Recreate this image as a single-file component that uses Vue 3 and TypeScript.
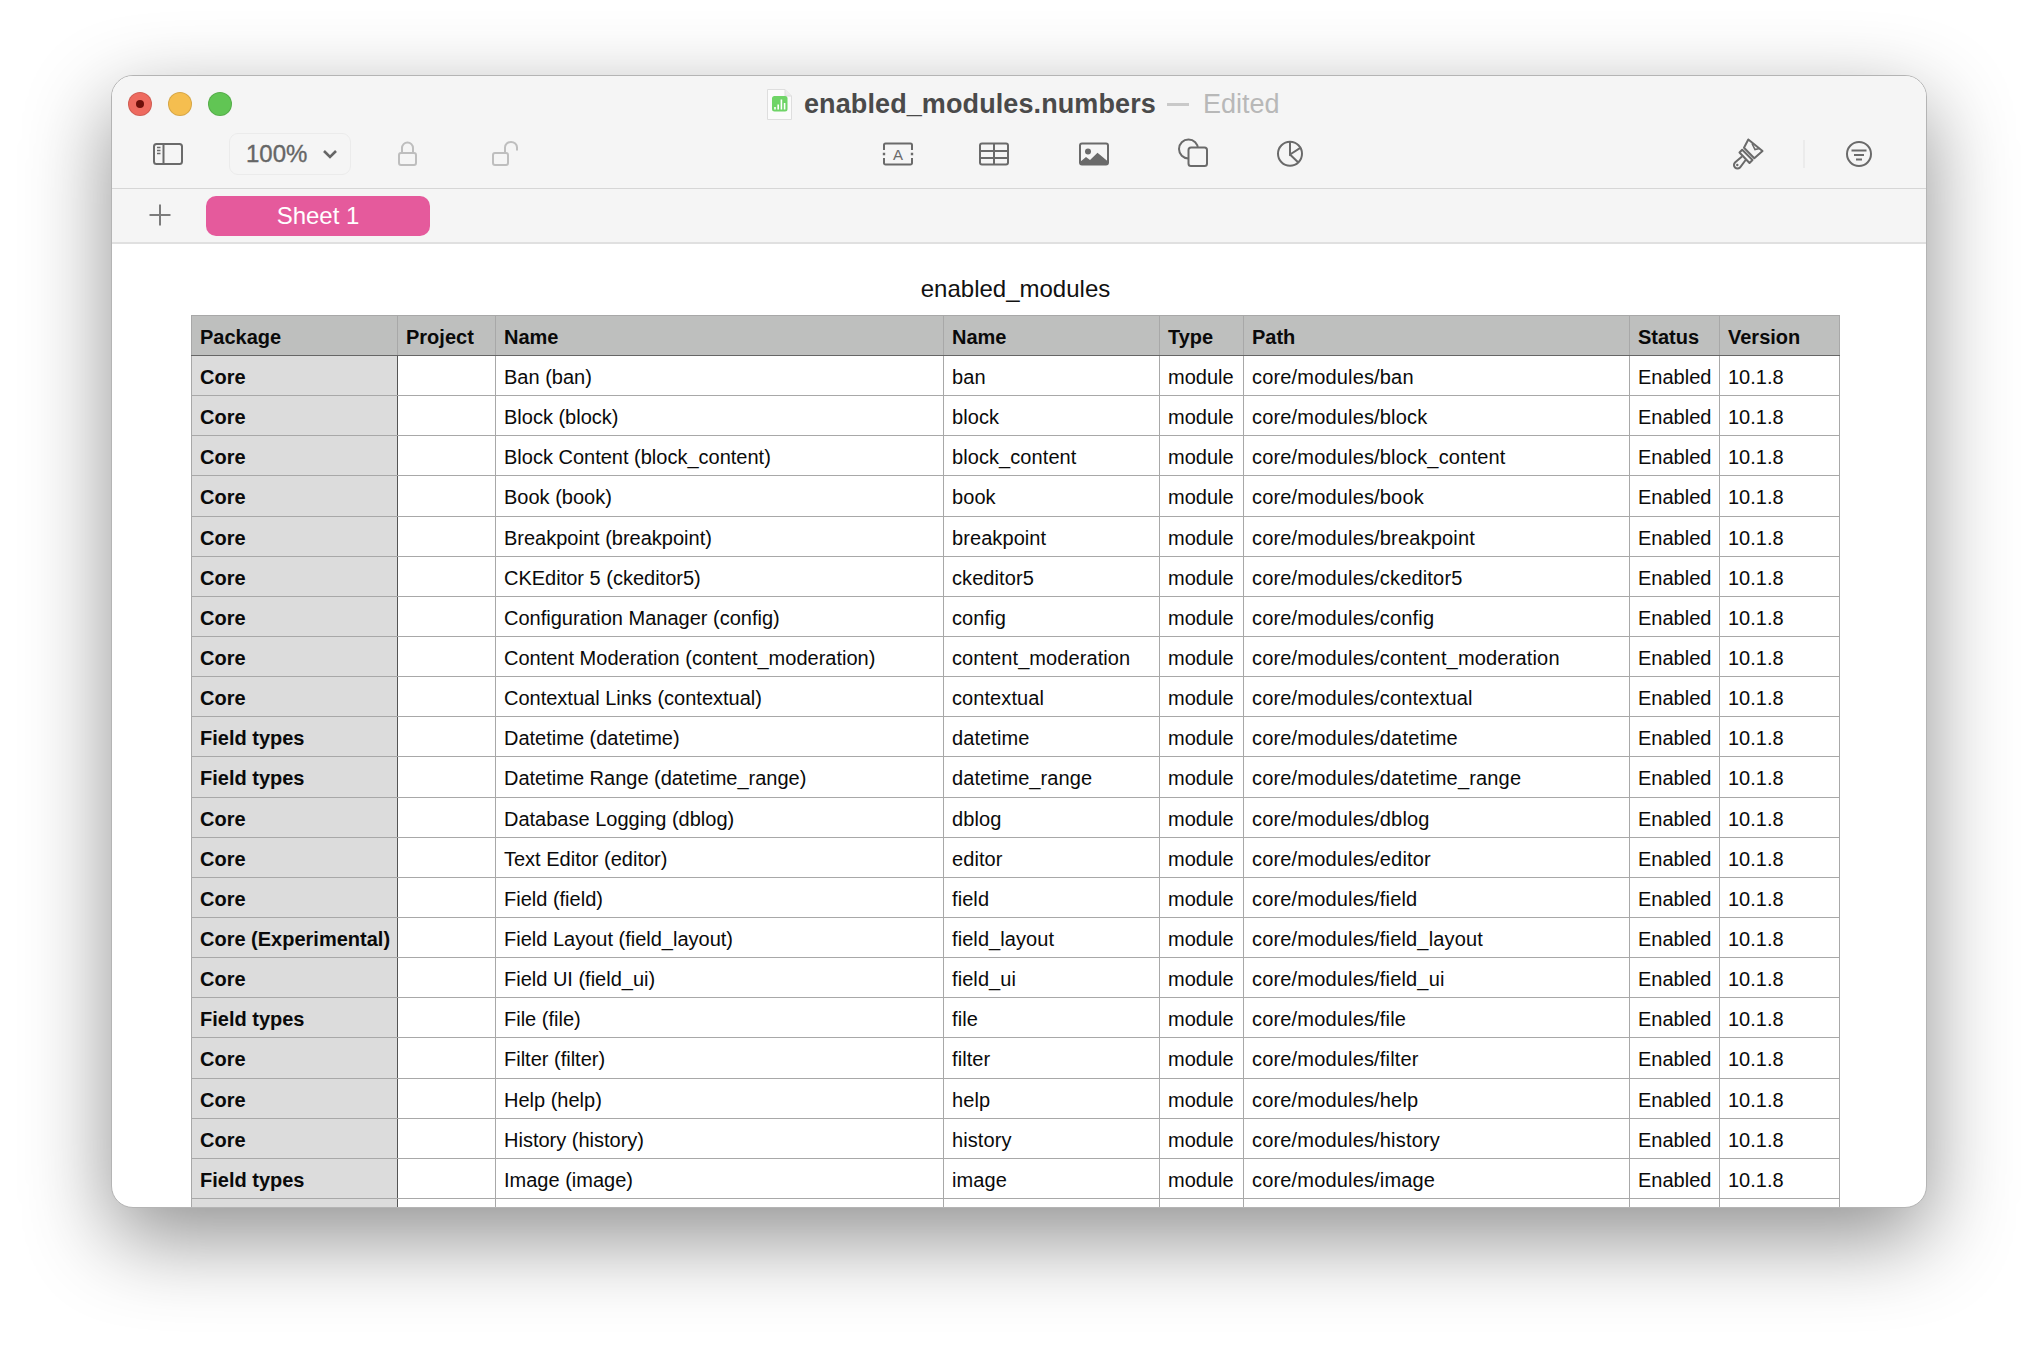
<script setup lang="ts">
interface Mod { pkg: string; label: string; id: string }
const mk = (pkg: string, label: string, id: string): Mod => ({ pkg, label, id })
const F = 'Field types'
const C = 'Core'
const rows: Mod[] = [
  mk(C, 'Ban', 'ban'), mk(C, 'Block', 'block'), mk(C, 'Block Content', 'block_content'),
  mk(C, 'Book', 'book'), mk(C, 'Breakpoint', 'breakpoint'), mk(C, 'CKEditor 5', 'ckeditor5'),
  mk(C, 'Configuration Manager', 'config'), mk(C, 'Content Moderation', 'content_moderation'),
  mk(C, 'Contextual Links', 'contextual'), mk(F, 'Datetime', 'datetime'),
  mk(F, 'Datetime Range', 'datetime_range'), mk(C, 'Database Logging', 'dblog'),
  mk(C, 'Text Editor', 'editor'), mk(C, 'Field', 'field'),
  mk('Core (Experimental)', 'Field Layout', 'field_layout'), mk(C, 'Field UI', 'field_ui'),
  mk(F, 'File', 'file'), mk(C, 'Filter', 'filter'), mk(C, 'Help', 'help'),
  mk(C, 'History', 'history'), mk(F, 'Image', 'image'),
]
const headers: string[] = ['Package', 'Project', 'Name', 'Name', 'Type', 'Path', 'Status', 'Version']
</script>

<template>
  <div class="page">
    <div class="window">
      <div class="titlebar">
        <span class="light red"><i></i></span>
        <span class="light yellow"></span>
        <span class="light green"></span>
        <svg class="docicon" width="25" height="31" viewBox="0 0 25 31">
          <path d="M.5 .5H18L24.500 7V30.500H.5Z" fill="#fbfbfb" stroke="#dedede" />
          <path d="M18 .5V7H24.500" fill="#ececec" stroke="#dedede" />
          <rect x="5" y="7" width="15.500" height="15.500" rx="2.500" fill="#6fd467" />
          <path d="M8 20.500v-2.500M11.200 20.500v-5M14.400 20.500v-10M17.600 20.500v-6.500" stroke="#fff" stroke-width="1.600" />
        </svg>
        <span class="docname">enabled_modules.numbers</span>
        <span class="dash"></span>
        <span class="edited">Edited</span>
      </div>

      <div class="toolbar">
        <svg class="ic ic-sidebar" viewBox="0 0 32 32">
          <rect x="2" y="6" width="28" height="20" rx="2.500" />
          <path d="M11.500 6V26" />
          <path class="thin" d="M5 9.500H8.500M5 12.500H8.500M5 15.500H8.500" />
        </svg>
        <div class="zoombox">
          <span>100%</span>
          <svg width="16" height="10" viewBox="0 0 16 10"><path d="M2 2L8 8L14 2" fill="none" stroke="#666" stroke-width="2.600" /></svg>
        </div>
        <svg class="ic off ic-lock" viewBox="0 0 32 32">
          <rect x="8" y="15" width="17" height="12" rx="2" />
          <path d="M11 15V10a5.500 5.500 0 0 1 11 0V15" />
        </svg>
        <svg class="ic off ic-unlock" viewBox="0 0 32 32">
          <rect x="5" y="15" width="15" height="12" rx="2" />
          <path d="M17 15V9.500a6 5.500 0 0 1 12 0V12.500" />
        </svg>
        <svg class="ic ic-text" viewBox="0 0 32 32">
          <path d="M2 12V7A1.500 1.500 0 0 1 3.500 5.500H28.500A1.500 1.500 0 0 1 30 7V12M2 20V25A1.500 1.500 0 0 0 3.500 26.500H28.500A1.500 1.500 0 0 0 30 25V20" />
          <path d="M2 14.800v2.400M30 14.800v2.400" stroke-width="2.400" />
          <text x="16" y="22" text-anchor="middle" class="a">A</text>
        </svg>
        <svg class="ic ic-table" viewBox="0 0 32 32">
          <rect x="2" y="5.500" width="28" height="21" rx="2" />
          <path d="M2 13H30M2 20H30M16 5.500V26.500" />
        </svg>
        <svg class="ic ic-image" viewBox="0 0 32 32">
          <rect x="2" y="5.500" width="28" height="21" rx="2" />
          <circle class="solid" cx="10" cy="13.500" r="3" />
          <path class="solid" d="M2 26.500V24L8 19L12 22L19.500 14.700L30 23.500V26.500Z" />
        </svg>
        <svg class="ic ic-shapes" viewBox="0 0 32 32">
          <circle cx="10.500" cy="11" r="9.500" />
          <rect class="cover" x="10.500" y="9.500" width="18.500" height="18.500" rx="2.500" />
        </svg>
        <svg class="ic ic-chart" viewBox="0 0 32 32">
          <circle cx="16" cy="15.700" r="12" />
          <path d="M16 3.700V16.500L26.700 9.700M16 16.500L24.300 24.500" />
        </svg>
        <svg class="ic ic-brush" viewBox="0 0 32 32">
          <path d="M13 9.700L17.300 1.500L31.500 13L23.300 20.300Z" stroke-linejoin="round" />
          <path d="M21 5.500L24 11.500L28.500 10.500" stroke-width="1.600" />
          <path d="M11.200 11.800L21.500 22L18.500 25L8.500 14.500Z" stroke-linejoin="round" />
          <path d="M11 18.500L4 24.500a3.500 3.500 0 0 0 5 5L15 21.500" />
          <circle class="solid" cx="6.300" cy="27" r="1.200" />
        </svg>
        <span class="divider"></span>
        <svg class="ic ic-comment" viewBox="0 0 32 32">
          <circle cx="16" cy="16" r="12" />
          <path d="M8.500 12.500H23.500M11 17H21M13 21.500H19" />
        </svg>
      </div>

      <div class="tabbar">
        <svg class="plus" width="32" height="32" viewBox="0 0 32 32"><path d="M5.500 16H26.500M16 5.500V26.500" stroke="#7c7c7c" stroke-width="2" fill="none" /></svg>
        <div class="tab">Sheet 1</div>
      </div>

      <div class="sheet">
        <div class="tablearea">
          <div class="tabletitle">enabled_modules</div>
          <div class="row head">
            <div v-for="(h, i) in headers" :key="i" class="cell">{{ h }}</div>
          </div>
          <div v-for="r in rows" :key="r.id" class="row">
            <div class="cell pkg">{{ r.pkg }}</div>
            <div class="cell"></div>
            <div class="cell">{{ r.label }} ({{ r.id }})</div>
            <div class="cell slug">{{ r.id }}</div>
            <div class="cell">module</div>
            <div class="cell path">core/modules/{{ r.id }}</div>
            <div class="cell">Enabled</div>
            <div class="cell">10.1.8</div>
          </div>
          <div class="row">
            <div class="cell pkg"></div>
            <div class="cell"></div>
            <div class="cell"></div>
            <div class="cell"></div>
            <div class="cell"></div>
            <div class="cell"></div>
            <div class="cell"></div>
            <div class="cell"></div>
          </div>
        </div>
      </div>
    </div>
  </div>
</template>

<style>
html, body { margin: 0; background: #fff; }
</style>

<style scoped>
.page {
  width: 2038px;
  height: 1356px;
  box-sizing: border-box;
  padding: 75px 0 0 111px;
  overflow: hidden;
  font-family: "Liberation Sans", Arial, sans-serif;
}
.window {
  width: 1816px;
  height: 1133px;
  box-sizing: border-box;
  border: 1px solid #b4b4b4;
  border-radius: 22px;
  overflow: hidden;
  background: #fff;
  box-shadow: 0 30px 85px rgba(0, 0, 0, 0.44);
  display: flex;
  flex-direction: column;
}
.titlebar {
  height: 56px;
  box-sizing: border-box;
  padding: 0 0 0 16px;
  background: #f5f5f5;
  display: flex;
  align-items: center;
}
.light {
  width: 24px;
  height: 24px;
  box-sizing: border-box;
  border-radius: 50%;
  margin-right: 16px;
  border: 1px solid rgba(0, 0, 0, 0.12);
  display: flex;
  align-items: center;
  justify-content: center;
}
.light i { width: 8px; height: 8px; border-radius: 50%; background: #6e0f0a; }
.red { background: #ee6a5f; }
.yellow { background: #f5be4f; }
.green { background: #61c554; }
.docicon { margin-left: 519px; margin-right: 12px; flex: none; }
.docname {
  font-size: 27px;
  font-weight: 700;
  color: #4a4a4a;
  letter-spacing: 0.1px;
}
.dash { width: 22px; height: 3px; background: #c9c9c9; margin: 0 14px 0 11px; }
.edited { font-size: 27px; color: #b8b8b8; }

.toolbar {
  height: 57px;
  box-sizing: border-box;
  background: #f5f5f5;
  border-bottom: 1px solid #d6d6d6;
  padding: 0 0 13px 40px;
  display: flex;
  align-items: center;
}
.ic {
  width: 32px;
  height: 32px;
  flex: none;
  overflow: visible;
  fill: none;
  stroke: #6a6a6a;
  stroke-width: 2;
}
.ic .thin { stroke-width: 1.5; }
.ic .solid { fill: #6a6a6a; stroke: none; }
.ic .cover { fill: #f5f5f5; }
.ic .a { fill: #6a6a6a; stroke: none; font-size: 15px; font-family: "Liberation Sans", sans-serif; }
.ic.off { stroke: #bebebe; }
.zoombox {
  margin-left: 45px;
  width: 122px;
  height: 42px;
  box-sizing: border-box;
  border: 1.5px solid #ebebeb;
  border-radius: 9px;
  display: flex;
  align-items: center;
  padding-left: 16px;
  gap: 15px;
  font-size: 24px;
  color: #666;
  -webkit-text-stroke: 0.35px #666;
}
.ic-lock { margin-left: 40px; }
.ic-unlock { margin-left: 65px; }
.ic-text { margin-left: 362px; }
.ic-table { margin-left: 64px; }
.ic-image { margin-left: 68px; }
.ic-shapes { margin-left: 68px; }
.ic-chart { margin-left: 64px; }
.ic-brush { margin-left: 425px; }
.divider { width: 2px; height: 28px; background: #ebebeb; margin: 0 38px 0 40px; }

.tabbar {
  height: 55px;
  box-sizing: border-box;
  background: #f5f5f5;
  border-bottom: 2px solid #e0e0e0;
  padding: 1px 0 0 32px;
  display: flex;
  align-items: center;
}
.plus { margin-bottom: 3px; }
.tab {
  margin-left: 30px;
  width: 224px;
  height: 40px;
  border-radius: 10px;
  background: #e55a9c;
  color: #fff;
  font-size: 24px;
  display: flex;
  align-items: center;
  justify-content: center;
}

.sheet {
  flex: 1;
  min-height: 0;
  padding-left: 79px;
  overflow: hidden;
}
.tablearea { width: 1649px; }
.tabletitle {
  height: 71px;
  box-sizing: border-box;
  padding-top: 31px;
  text-align: center;
  font-size: 24px;
  line-height: 28px;
  color: #111;
}
.row {
  display: grid;
  grid-template-columns: 207px 98px 448px 216px 84px 386px 90px 120px;
  height: 40.15px;
  box-sizing: border-box;
  border-bottom: 1px solid #a8a8a8;
  font-size: 20px;
  color: #0a0a0a;
}
.cell {
  box-sizing: border-box;
  padding: 4px 0 0 8px;
  border-right: 1px solid #a8a8a8;
  display: flex;
  align-items: center;
  white-space: nowrap;
  min-width: 0;
}
.cell:first-child { border-left: 1px solid #a8a8a8; }
.slug { letter-spacing: 0.08px; }
.path { letter-spacing: 0.17px; }
.row.head {
  height: 41px;
  background: #bebfbe;
  border-top: 1px solid #a8a8a8;
  border-bottom: 1px solid #666;
  font-weight: 700;
}
.row.head .cell { padding-top: 3px; }
.pkg {
  background: #dcdcdc;
  font-weight: 700;
  border-right-color: #555;
}
</style>
